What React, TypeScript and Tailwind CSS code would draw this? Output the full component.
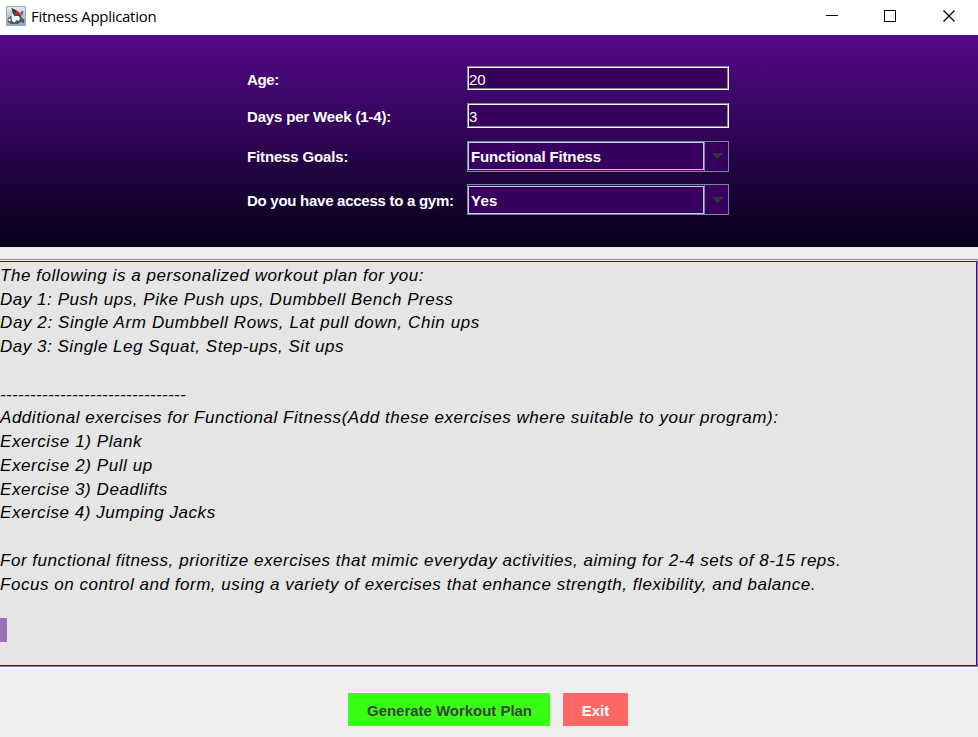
import React from "react";

const planLines = [
  { text: "The following is a personalized workout plan for you:", tracking: "tracking-[0.55px]" },
  { text: "Day 1: Push ups, Pike Push ups, Dumbbell Bench Press", tracking: "tracking-[0.54px]" },
  { text: "Day 2: Single Arm Dumbbell Rows, Lat pull down, Chin ups", tracking: "tracking-[0.6px]" },
  { text: "Day 3: Single Leg Squat, Step-ups, Sit ups", tracking: "tracking-[0.52px]" },
  { text: "", tracking: "" },
  { text: "-------------------------------", tracking: "tracking-[0.34px]" },
  {
    text: "Additional exercises for Functional Fitness(Add these exercises where suitable to your program):",
    tracking: "tracking-[0.54px]",
  },
  { text: "Exercise 1) Plank", tracking: "tracking-[0.58px]" },
  { text: "Exercise 2) Pull up", tracking: "tracking-[0.58px]" },
  { text: "Exercise 3) Deadlifts", tracking: "tracking-[0.57px]" },
  { text: "Exercise 4) Jumping Jacks", tracking: "tracking-[0.54px]" },
  { text: "", tracking: "" },
  {
    text: "For functional fitness, prioritize exercises that mimic everyday activities, aiming for 2-4 sets of 8-15 reps.",
    tracking: "tracking-[0.535px]",
  },
  {
    text: "Focus on control and form, using a variety of exercises that enhance strength, flexibility, and balance.",
    tracking: "tracking-[0.535px]",
  },
];

function DukeIcon() {
  return (
    <svg width="20" height="20" viewBox="0 0 20 20">
      <defs>
        <linearGradient id="tile" x1="0" y1="0" x2="0" y2="1">
          <stop offset="0" stopColor="#e6ecf1" />
          <stop offset="1" stopColor="#86a3bb" />
        </linearGradient>
      </defs>
      <rect x="0.5" y="0.5" width="19" height="19" fill="url(#tile)" stroke="#9aabb8" />
      <path d="M5.5 2C7.5 3 11 4 13 6.5L15 10L15.5 13L10 12L7 9Z" fill="#3a3e42" />
      <path d="M1.5 13L4.5 10L7 11L15 11L18.5 14L18 17L14.5 16L12 18L5 18L2 16Z" fill="#515960" />
      <path d="M6.5 7L8.5 10L13 10L14 13L12.5 15L10.5 14L8.5 16.5L6 15L5.5 11Z" fill="#f4f4f1" />
      <path d="M2 13.5L4 12.5L5 14L3.5 15.5Z" fill="#e6e9e9" />
      <path d="M14 7L16.5 4.5L17.5 5.5L16 10Z" fill="#5a6268" />
      <ellipse cx="10.8" cy="7.6" rx="2.3" ry="2.1" fill="#d51d24" />
    </svg>
  );
}

function TitleBar() {
  return (
    <header className="flex h-[35px] items-start bg-white">
      <div className="flex pl-1.5 pt-1.5">
        <DukeIcon />
      </div>
      <span className="pl-[5px] pt-[6px] font-['Open_Sans','Noto_Sans',sans-serif] text-[15px] leading-[21px] tracking-[-0.3px] text-black">
        Fitness Application
      </span>
      <div className="ml-auto flex pr-[22px] pt-[9px]">
        <svg width="130" height="14" viewBox="0 0 130 14" fill="none" stroke="black" shapeRendering="crispEdges">
          <path d="M0 6.5H12" />
          <rect x="58.5" y="1.5" width="11" height="11" />
          <path d="M117.5 1.5L128.5 12.5M128.5 1.5L117.5 12.5" shapeRendering="auto" strokeWidth="1.2" />
        </svg>
      </div>
    </header>
  );
}

function Field({ value, height }: { value: string; height: string }) {
  return (
    <div className={`w-[262px] border border-b-white border-l-[#7a8a99] border-r-white border-t-[#7a8a99] ${height}`}>
      <div className="h-full border border-b-[#7a8a99] border-l-white border-r-[#7a8a99] border-t-white bg-[#38005e] text-[15px] leading-[23px] tracking-[-0.15px] text-white">
        {value}
      </div>
    </div>
  );
}

function Combo({ value, inset, arrowInset, tracking }: { value: string; inset: string; arrowInset: string; tracking: string }) {
  return (
    <div className="flex h-[31px] w-[262px] border border-[#7a8a99] bg-[#38005e]">
      <div className={`w-[236px] ${inset}`}>
        <div className={`h-7 border border-[#b8cfe5] pl-[2px] text-[15px] font-bold leading-[27px] text-white ${tracking}`}>
          {value}
        </div>
      </div>
      <div className={`flex flex-1 items-start justify-center border-l border-[#7a8a99] ${arrowInset}`}>
        <svg width="12" height="6" viewBox="0 0 12 6" shapeRendering="crispEdges">
          <path d="M0 0H12L6 6Z" fill="#333333" />
        </svg>
      </div>
    </div>
  );
}

function Label({ tracking, children }: { tracking: string; children: React.ReactNode }) {
  return (
    <div className={`w-[220px] whitespace-nowrap text-[15px] font-bold leading-5 text-white ${tracking}`}>{children}</div>
  );
}

export default function App() {
  return (
    <main className="flex h-[737px] w-[978px] flex-col overflow-hidden bg-[#eeeeee] font-['Liberation_Sans',Arial,sans-serif]">
      <TitleBar />
      <section className="h-[212px] bg-linear-to-b/srgb from-[#55098b] to-[#050018] pl-[247px] pt-[31px]">
        <div className="flex h-[37px] items-start">
          <div className="pt-[4px]"><Label tracking="tracking-[-0.4px]">Age:</Label></div>
          <Field value="20" height="h-6" />
        </div>
        <div className="flex h-[38px] items-start">
          <div className="pt-[4px]"><Label tracking="tracking-[-0.16px]">Days per Week (1-4):</Label></div>
          <Field value="3" height="h-[25px]" />
        </div>
        <div className="flex h-[43px] items-start">
          <div className="pt-[6px]"><Label tracking="tracking-[-0.15px]">Fitness Goals:</Label></div>
          <Combo value="Functional Fitness" inset="pt-0" arrowInset="pt-[11px]" tracking="tracking-[-0.14px]" />
        </div>
        <div className="flex items-start">
          <div className="pt-[7px]"><Label tracking="tracking-[-0.27px]">Do you have access to a gym:</Label></div>
          <Combo value="Yes" inset="pt-px" arrowInset="pt-3" tracking="tracking-[0.3px]" />
        </div>
      </section>
      <section className="mt-3 h-[409px] border-b border-t border-b-white border-t-[#7a8a99]">
        <div className="h-full border-b border-r border-t border-b-[#7a8a99] border-r-[#7a8a99] border-t-[#eeeeee]">
          <div className="h-full border-b border-r border-t border-[#530094] bg-[#e5e5e5] pt-[1.8px] text-[17px] italic leading-[23.77px] text-black">
            {planLines.map((line, i) => (
              <div key={i} className={`h-[23.77px] whitespace-pre ${line.tracking}`}>{line.text}</div>
            ))}
            <div className="mt-[21.4px] h-6 w-[7px] bg-[#9772b2]" />
          </div>
        </div>
      </section>
      <footer className="mt-[25px] flex gap-[13px] pl-[348px]">
        <button className="h-[33px] w-[202px] whitespace-nowrap bg-[#39ff14] pl-px pt-[3px] text-[15px] font-bold tracking-[-0.03px] text-[#3b4338]">
          Generate Workout Plan
        </button>
        <button className="h-[33px] w-[65px] bg-[#ff6666] pt-[3px] text-[15px] font-bold text-white">Exit</button>
      </footer>
    </main>
  );
}
